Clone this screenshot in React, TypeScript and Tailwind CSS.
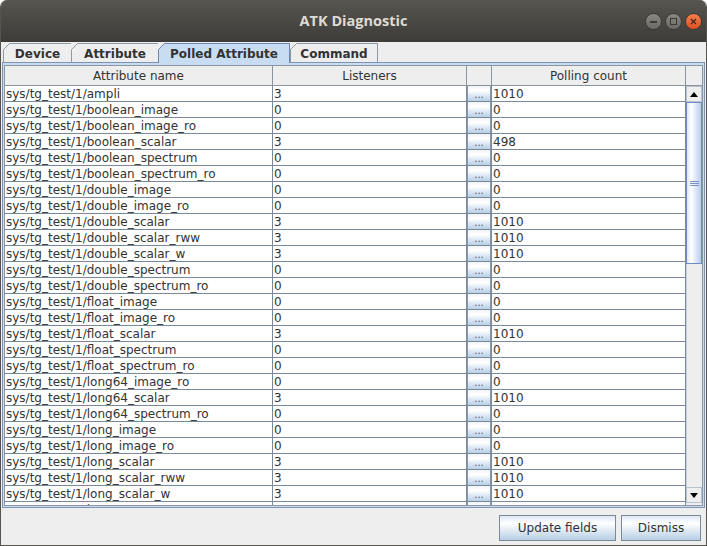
import React from "react";

const rows: [string, string, string][] = [
  ["sys/tg_test/1/ampli", "3", "1010"],
  ["sys/tg_test/1/boolean_image", "0", "0"],
  ["sys/tg_test/1/boolean_image_ro", "0", "0"],
  ["sys/tg_test/1/boolean_scalar", "3", "498"],
  ["sys/tg_test/1/boolean_spectrum", "0", "0"],
  ["sys/tg_test/1/boolean_spectrum_ro", "0", "0"],
  ["sys/tg_test/1/double_image", "0", "0"],
  ["sys/tg_test/1/double_image_ro", "0", "0"],
  ["sys/tg_test/1/double_scalar", "3", "1010"],
  ["sys/tg_test/1/double_scalar_rww", "3", "1010"],
  ["sys/tg_test/1/double_scalar_w", "3", "1010"],
  ["sys/tg_test/1/double_spectrum", "0", "0"],
  ["sys/tg_test/1/double_spectrum_ro", "0", "0"],
  ["sys/tg_test/1/float_image", "0", "0"],
  ["sys/tg_test/1/float_image_ro", "0", "0"],
  ["sys/tg_test/1/float_scalar", "3", "1010"],
  ["sys/tg_test/1/float_spectrum", "0", "0"],
  ["sys/tg_test/1/float_spectrum_ro", "0", "0"],
  ["sys/tg_test/1/long64_image_ro", "0", "0"],
  ["sys/tg_test/1/long64_scalar", "3", "1010"],
  ["sys/tg_test/1/long64_spectrum_ro", "0", "0"],
  ["sys/tg_test/1/long_image", "0", "0"],
  ["sys/tg_test/1/long_image_ro", "0", "0"],
  ["sys/tg_test/1/long_scalar", "3", "1010"],
  ["sys/tg_test/1/long_scalar_rww", "3", "1010"],
  ["sys/tg_test/1/long_scalar_w", "3", "1010"],
  ["sys/tg_test/1/long_spectrum", "0", "0"],
];

function Tab({ label, w, selected, last }: { label: string; w: string; selected?: boolean; last?: boolean }) {
  return (
    <div
      className={
        "relative flex items-center justify-center font-bold border-l border-t " +
        w +
        (last ? " border-r" : "") +
        (selected
          ? " h-[20px] -mb-[1px] z-10 bg-[#c8ddf2] border-[#6f86b0] border-r"
          : " h-[19px] bg-[#eeeeee] border-[#8e9aa8]")
      }
    >
      <svg className="absolute -left-[1px] -top-[1px]" width="7" height="7" viewBox="0 0 7 7">
        <polygon points="0,0 7,0 0,7" fill="#eeeeee" />
        <line x1="0.5" y1="6.5" x2="6.5" y2="0.5" stroke={selected ? "#6f86b0" : "#8e9aa8"} strokeWidth="1" />
      </svg>
      <span className="pt-[1px]">{label}</span>
    </div>
  );
}

function DotsButton() {
  return (
    <div className="h-full border-r border-b border-[#7a8a99] flex">
      <div className="flex-1 border-x border-[#8a97a8] bg-linear-to-b from-[#eef3f9] via-white via-30% to-[#b8cfe5] flex items-end justify-center">
        <span className="text-[10px] leading-[10px] text-[#4a5670] pb-[1px]">...</span>
      </div>
    </div>
  );
}

export default function App() {
  return (
    <div className="w-[707px] h-[546px] bg-white">
      <div className="w-full h-full flex flex-col rounded-t-[7px] overflow-hidden bg-[#eeeeee] border-x border-b border-[#55544f] font-['DejaVu_Sans',sans-serif] text-[12px] text-[#333333]">
        {/* Title bar */}
        <div className="relative h-[42px] shrink-0 flex items-center justify-center bg-linear-to-b from-[#57554f] to-[#3d3c38]">
          <span className="font-['Open_Sans',sans-serif] font-bold text-[14.5px] text-[#dfdbd2]">ATK Diagnostic</span>
          <div className="absolute right-[4px] top-[13px] flex gap-[3px]">
            <div className="w-[17px] h-[17px] rounded-full bg-linear-to-b from-[#8a8883] to-[#6c6a65] border border-[#3a3935] flex items-center justify-center">
              <div className="w-[7px] h-[2px] bg-[#3b3a36]" />
            </div>
            <div className="w-[17px] h-[17px] rounded-full bg-linear-to-b from-[#8a8883] to-[#6c6a65] border border-[#3a3935] flex items-center justify-center">
              <div className="w-[7px] h-[7px] border border-[#3b3a36]" />
            </div>
            <div className="w-[17px] h-[17px] rounded-full bg-linear-to-b from-[#f57d4c] to-[#e0501c] border border-[#3a3935] flex items-center justify-center">
              <svg width="7" height="7" viewBox="0 0 7 7">
                <path d="M1 1 L6 6 M6 1 L1 6" stroke="#3b2a22" strokeWidth="1.3" />
              </svg>
            </div>
          </div>
        </div>

        {/* Tabs */}
        <div className="h-[19px] mt-[1px] shrink-0 flex items-end pl-[2px]">
          <Tab label="Device" w="w-[68px]" />
          <Tab label="Attribute" w="w-[87px]" />
          <Tab label="Polled Attribute" w="w-[132px]" selected />
          <Tab label="Command" w="w-[88px]" last />
        </div>

        {/* Panel */}
        <div className="mx-[1px] h-[446px] shrink-0 border border-[#7f93b4] bg-[#c8ddf2] pt-[2px] px-[1px] pb-[1px]">
          <div className="h-full border border-[#8c96a3] bg-white flex flex-col">
            {/* header */}
            <div className="h-[20px] shrink-0 grid grid-cols-[268px_194px_25px_194px_16px] bg-[#eeeeee]">
              <div className="border-r border-b border-[#8a949f] flex items-center justify-center pt-[1px]">Attribute name</div>
              <div className="border-r border-b border-[#8a949f] flex items-center justify-center pt-[1px]">Listeners</div>
              <div className="border-r border-b border-[#8a949f]" />
              <div className="border-r border-b border-[#8a949f] flex items-center justify-center pt-[1px]">Polling count</div>
              <div className="border-b border-[#8a949f]" />
            </div>
            {/* body */}
            <div className="flex-1 min-h-0 flex overflow-hidden">
              <div className="w-[681px] h-full overflow-hidden">
                {rows.map(([name, lis, cnt]) => (
                  <div key={name} className="h-[16px] grid grid-cols-[268px_194px_25px_194px] leading-[16px]">
                    <div className="border-r border-b border-[#7a8a99] pl-[1px] whitespace-nowrap overflow-hidden">{name}</div>
                    <div className="border-r border-b border-[#7a8a99] pl-[1px] overflow-hidden">{lis}</div>
                    <DotsButton />
                    <div className="border-r border-b border-[#7a8a99] pl-[1px] overflow-hidden">{cnt}</div>
                  </div>
                ))}
              </div>
              {/* scrollbar */}
              <div className="w-[16px] flex flex-col bg-[#eeeeee]">
                <div className="h-[16px] shrink-0 border border-[#b8c3cf] bg-[#eeeeee] flex items-center justify-center">
                  <svg width="8" height="5" viewBox="0 0 8 5">
                    <polygon points="4,0 8,5 0,5" fill="#000" />
                  </svg>
                </div>
                <div className="h-[162px] shrink-0 border border-[#6f8cc2] bg-linear-to-r from-[#dde8f3] via-white via-30% to-[#b8cfe5] flex flex-col items-center justify-center gap-[1px]">
                  <div className="w-[9px] h-[1px] bg-[#7a94c4]" />
                  <div className="w-[9px] h-[1px] bg-[#7a94c4]" />
                  <div className="w-[9px] h-[1px] bg-[#7a94c4]" />
                </div>
                <div className="flex-1 border-l border-[#c9d2dc]" />
                <div className="h-[16px] shrink-0 border border-[#b8c3cf] bg-[#eeeeee] flex items-center justify-center">
                  <svg width="8" height="5" viewBox="0 0 8 5">
                    <polygon points="0,0 8,0 4,5" fill="#000" />
                  </svg>
                </div>
                <div className="h-[2px] shrink-0" />
              </div>
            </div>
          </div>
        </div>

        {/* Buttons */}
        <div className="flex-1 flex items-start justify-end gap-[5px] pt-[7px] pr-[5px]">
          <button className="w-[117px] h-[26px] border border-[#7a8a99] bg-linear-to-b from-[#dde8f3] via-white via-30% to-[#b8cfe5] text-[12px] text-[#333333]">
            Update fields
          </button>
          <button className="w-[80px] h-[26px] border border-[#7a8a99] bg-linear-to-b from-[#dde8f3] via-white via-30% to-[#b8cfe5] text-[12px] text-[#333333]">
            Dismiss
          </button>
        </div>
      </div>
    </div>
  );
}
